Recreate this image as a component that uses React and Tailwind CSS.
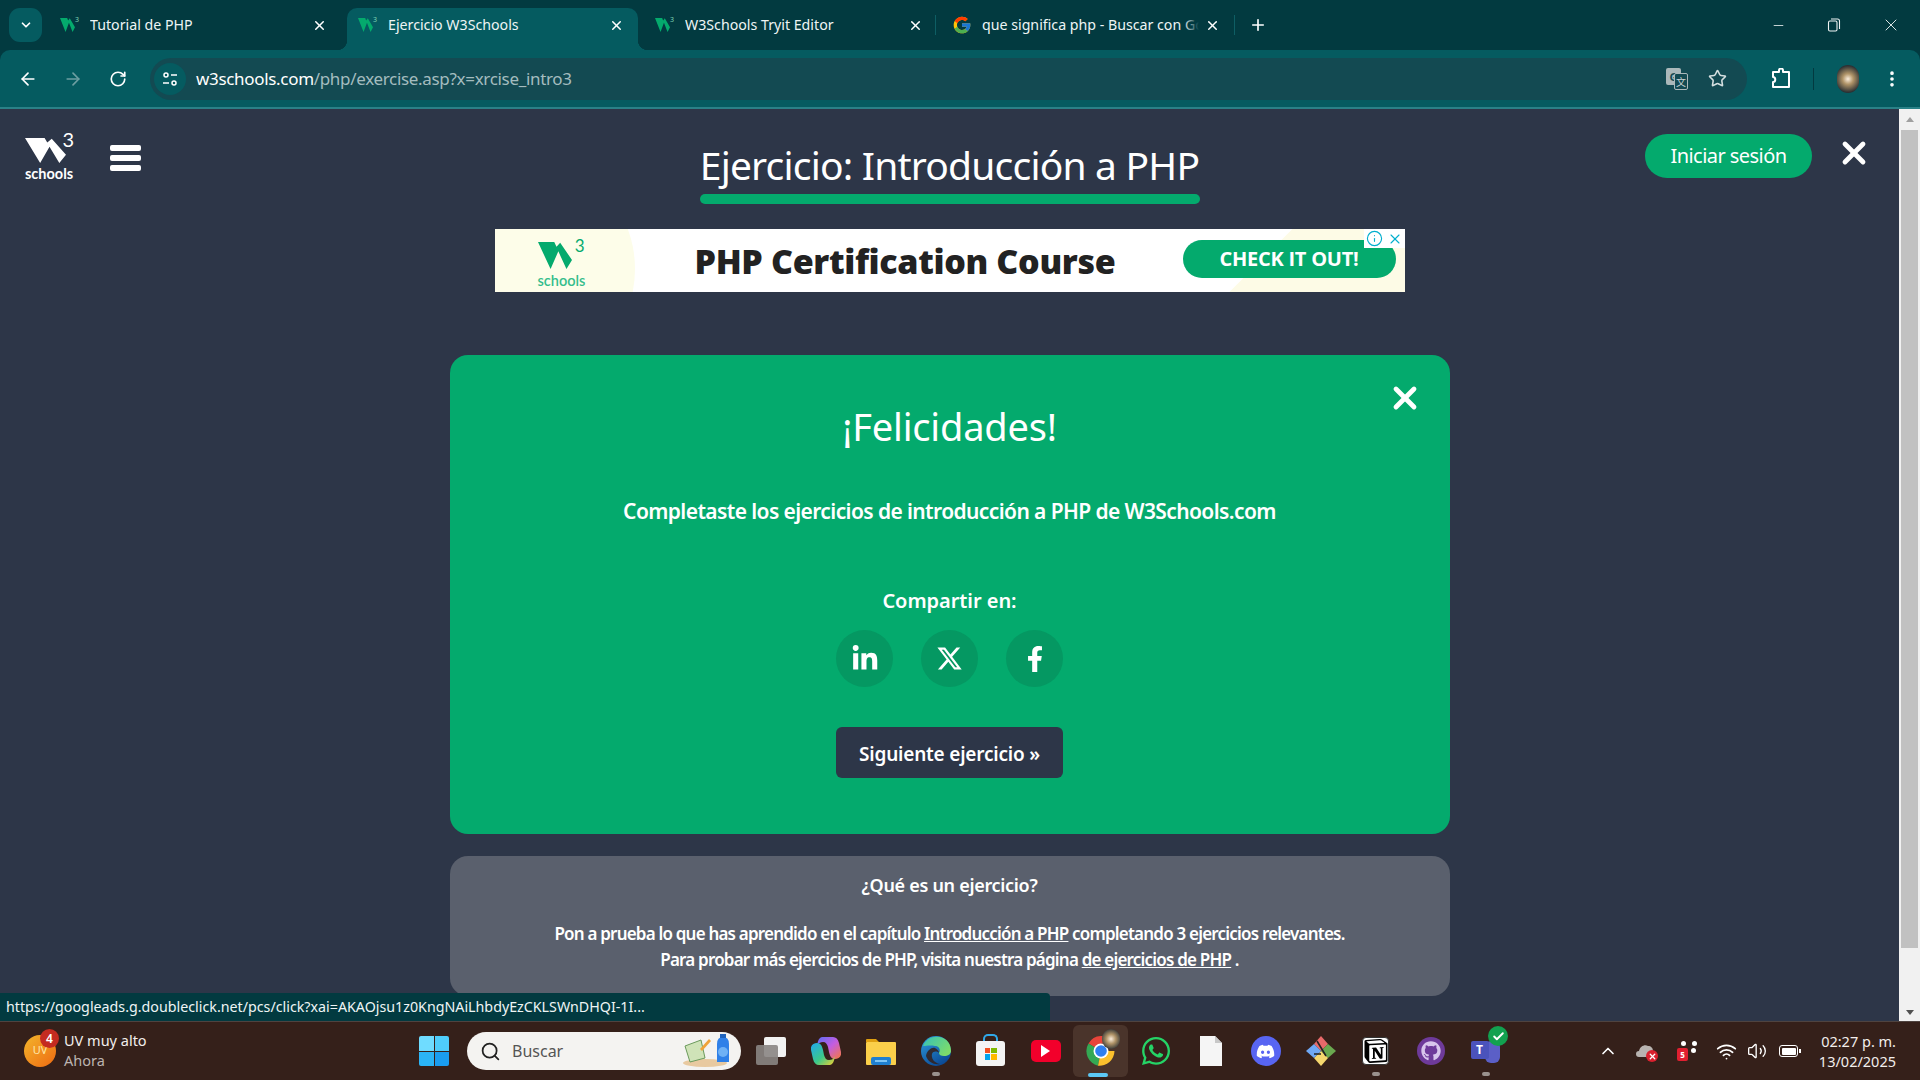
import React from "react";
import { ArrowLeft, ArrowRight, RotateCw, Star, ChevronDown, Plus, X, Minus, Search, EllipsisVertical, ChevronUp, Wifi, Volume2, Info, Check } from "lucide-react";
import { FaLinkedinIn, FaFacebookF, FaWhatsapp, FaDiscord, FaGithub } from "react-icons/fa";
import { FaXTwitter } from "react-icons/fa6";
import { FcGoogle } from "react-icons/fc";
import { SiNotion } from "react-icons/si";

const W = ({ className }) => (
  <svg viewBox="0 0 92 78" preserveAspectRatio="none" className={className} fill="currentColor">
    <path d="M0 0H44L50 14L60 2L92 52L77 78L55 27L34 78Z" />
  </svg>
);

const Favicon = () => (
  <span className="relative flex w-5 h-5 items-center shrink-0 text-[#04AA6D]">
    <W className="w-[15px] h-[14px]" />
    <span className="absolute right-[1px] top-[1px] text-[7px] leading-none text-[#7fd4b4]">3</span>
  </span>
);

const Tab = ({ title, active, icon, className }) => (
  <div className={`relative flex items-center h-[42px] rounded-t-[10px] pl-[11px] pb-[8px] ${className} ${active ? "bg-[#055b60]" : ""}`}>
    {active && <span className="absolute -left-[10px] bottom-0 w-[10px] h-[10px] bg-[radial-gradient(circle_at_0_0,transparent_10px,#055b60_10.5px)]" />}
    {active && <span className="absolute -right-[10px] bottom-0 w-[10px] h-[10px] bg-[radial-gradient(circle_at_100%_0,transparent_10px,#055b60_10.5px)]" />}
    <span className="w-5 h-5 flex items-center justify-center shrink-0">{icon || <Favicon />}</span>
    <span className="relative ml-[10px] mr-[6px] flex-1 overflow-hidden whitespace-nowrap text-[14.2px] text-[#eef5f5]">
      {title}
      <span className="absolute right-0 top-0 w-[16px] h-full bg-[linear-gradient(90deg,transparent,#023a40)]" style={{ display: active ? "none" : undefined }} />
    </span>
    <X size={15} strokeWidth={2.4} className="text-white shrink-0" />
  </div>
);

const Sep = () => <span className="w-[1px] h-[20px] bg-[#0e5e64] mb-[15px] shrink-0" />;

const TabStrip = () => (
  <div className="h-[50px] bg-[#023a40] flex items-end shrink-0">
    <div className="ml-[9px] mb-[8px] mr-[7px] w-[33px] h-[34px] rounded-[11px] bg-[#055b60] flex items-center justify-center">
      <ChevronDown size={14} strokeWidth={3} className="text-white" />
    </div>
    <Tab title="Tutorial de PHP" className="w-[298px] pr-[20px]" />
    <Tab title="Ejercicio W3Schools" active className="w-[291px] pr-[14px]" />
    <Tab title="W3Schools Tryit Editor" className="w-[291px] ml-[6px] pr-[12px]" />
    <Sep />
    <Tab title="que significa php - Buscar con Google" className="w-[293px] ml-[5px] pr-[14px]" icon={<FcGoogle size={20} />} />
    <Sep />
    <div className="ml-[13px] mb-[15px] w-[20px] h-[20px] flex items-center justify-center">
      <Plus size={18} strokeWidth={2.2} className="text-white" />
    </div>
    <div className="ml-auto flex items-center self-start text-[#eef3f3] h-[50px]">
      <div className="w-[56px] flex justify-center"><Minus size={15} strokeWidth={1.3} /></div>
      <div className="w-[56px] flex justify-center">
        <svg width="14" height="14" viewBox="0 0 14 14" fill="none" stroke="currentColor" strokeWidth="1.1"><rect x="1.5" y="3" width="8.5" height="10" rx="1.4" /><path d="M4 1h6.5A2 2 0 0 1 12.5 3v8" /></svg>
      </div>
      <div className="w-[58px] flex justify-center"><X size={20} strokeWidth={1.1} /></div>
    </div>
  </div>
);

const NavBtn = ({ children }) => <div className="w-[45px] flex justify-center shrink-0">{children}</div>;

const Toolbar = () => (
  <div className="h-[57px] bg-[#055b60] flex items-center rounded-t-[10px] shrink-0 pl-[5px]">
    <NavBtn><ArrowLeft size={20} strokeWidth={2} className="text-white" /></NavBtn>
    <NavBtn><ArrowRight size={20} strokeWidth={2} className="text-[#6d9ea1]" /></NavBtn>
    <NavBtn><RotateCw size={18} strokeWidth={2.2} className="text-white" /></NavBtn>
    <div className="ml-[10px] w-[1597px] h-[42px] rounded-full bg-[#134a52] flex items-center pl-[4px] shrink-0">
      <div className="w-[32px] h-[32px] rounded-full bg-[#055b60] flex items-center justify-center shrink-0">
        <svg width="16" height="16" viewBox="0 0 16 16" fill="none" stroke="white" strokeWidth="1.5"><circle cx="4" cy="4" r="2" /><path d="M9 4h6M1 12h6" /><circle cx="12" cy="12" r="2" /></svg>
      </div>
      <span className="ml-[10px] pt-[1px] text-[17px] text-white tracking-[-0.32px]">w3schools.com<span className="text-[#a4bcbf]">/php/exercise.asp?x=xrcise_intro3</span></span>
      <div className="ml-auto flex items-center pr-[20px] gap-[20px]">
        <div className="relative w-[22px] h-[22px]">
          <span className="absolute left-0 top-0 w-[15px] h-[17px] rounded-[2px] bg-[#aab8ba] text-[#134a52] text-[11px] font-bold leading-[17px] text-center">G</span>
          <span className="absolute right-0 bottom-0 w-[14px] h-[17px] rounded-[2px] border border-[#aab8ba] bg-[#134a52] text-[#c8d3d4] text-[10px] leading-[15px] text-center font-['Noto_Sans_CJK_SC',sans-serif]">文</span>
        </div>
        <Star size={19} strokeWidth={2} className="text-[#d5dfe0]" />
      </div>
    </div>
    <div className="ml-[16px] w-[36px] flex justify-center shrink-0">
      <svg width="20" height="22" viewBox="0 0 20 22" fill="none" stroke="white" strokeWidth="2"><path d="M8 4V2.5a2 2 0 0 1 4 0V4h6v15H2v-5c3 0 3-5 0-5V4z" strokeLinejoin="round" /></svg>
    </div>
    <span className="w-[1px] h-[22px] bg-[#023a40] ml-[14px] shrink-0" />
    <div className="ml-[23px] w-[22px] h-[28px] rounded-full shrink-0 bg-[radial-gradient(circle,#fbeedd_0%,#b09468_30%,#2c3033_75%)]" />
    <div className="ml-[21px] w-[24px] flex justify-center shrink-0"><EllipsisVertical size={20} strokeWidth={2.4} className="text-white" /></div>
  </div>
);

const Social = ({ children }) => (
  <div className="w-[57px] h-[57px] rounded-full bg-[#059862] flex items-center justify-center text-white">{children}</div>
);

const Page = () => (
  <div className="flex-1 h-full overflow-hidden flex flex-col items-center text-white font-['Noto_Sans',sans-serif]">
    <header className="relative w-full h-[120px] shrink-0">
      <div className="absolute left-[25px] top-[29px] w-[49px]">
        <W className="w-[41px] h-[25px] text-white" />
        <span className="absolute right-0 -top-[9px] text-[20px] leading-none font-['Lato',sans-serif]">3</span>
        <div className="text-[14.5px] leading-[16px] mt-[3px] font-bold font-['Lato',sans-serif]">schools</div>
      </div>
      <div className="absolute left-[110px] top-[36px] w-[31px] flex flex-col gap-[4px]">
        <span className="h-[6px] rounded-[2px] bg-white" />
        <span className="h-[6px] rounded-[2px] bg-white" />
        <span className="h-[6px] rounded-[2px] bg-white" />
      </div>
      <div className="flex flex-col items-center pt-[30px]">
        <h1 className="text-[39px] leading-[52px] tracking-[-0.8px] whitespace-nowrap w-[500px] text-center font-normal">Ejercicio: Introducción a PHP</h1>
        <span className="w-[500px] h-[10px] mt-[3px] rounded-full bg-[#04AA6D]" />
      </div>
      <div className="absolute left-[1645px] top-[25px] w-[167px] h-[44px] rounded-full bg-[#04AA6D] flex items-center justify-center text-[20px] tracking-[-0.55px]">Iniciar sesión</div>
      <X size={36} strokeWidth={3.2} className="absolute left-[1836px] top-[26px] text-white" />
    </header>

    <div className="relative w-[910px] h-[63px] bg-white shrink-0 overflow-hidden text-[#222]">
      <div className="absolute -left-[90px] -top-[75px] w-[230px] h-[230px] rounded-full bg-[#fdfde9]" />
      <div className="absolute -right-[90px] -bottom-[110px] w-[220px] h-[220px] rotate-45 bg-[#fdfbe6]" />
      <div className="absolute left-[43px] top-[13px] w-[47px] text-[#04AA6D]">
        <W className="w-[34px] h-[27px]" />
        <span className="absolute right-0 -top-[5px] text-[17px] leading-none font-['Lato',sans-serif]">3</span>
        <div className="text-[14.5px] leading-[14px] mt-[5px] font-semibold text-[#35bd8c] font-['Lato',sans-serif]">schools</div>
      </div>
      <div className="relative h-full flex items-center">
        <span className="ml-[200px] text-[34px] font-extrabold tracking-[-0.35px] whitespace-nowrap font-['Open_Sans',sans-serif] leading-none">PHP Certification Course</span>
        <span className="absolute left-[688px] top-[11px] w-[213px] h-[38px] rounded-full bg-[#04AA6D] text-white text-[20px] font-bold tracking-[-0.25px] flex items-center justify-center font-['Open_Sans',sans-serif]">CHECK IT OUT!</span>
      </div>
      <div className="absolute right-0 top-0 w-[41px] h-[19px] bg-white flex items-center justify-between text-[#00aecd] px-[2px]">
        <Info size={17} strokeWidth={1.6} />
        <X size={16} strokeWidth={1.6} />
      </div>
    </div>

    <section className="relative w-[1000px] h-[479px] mt-[63px] shrink-0 rounded-[18px] bg-[#04AA6D] flex flex-col items-center">
      <X size={36} strokeWidth={3.2} className="absolute left-[937px] top-[25px] text-white" />
      <h2 className="text-[38px] leading-[52px] mt-[45px] font-normal tracking-[-0.2px]">¡Felicidades!</h2>
      <p className="text-[21px] leading-[30px] font-semibold mt-[44px] tracking-[-0.6px]">Completaste los ejercicios de introducción a PHP de W3Schools.com</p>
      <p className="text-[20px] leading-[28px] font-semibold mt-[61px] tracking-[-0.05px]">Compartir en:</p>
      <div className="flex gap-[28px] mt-[15px]">
        <Social><FaLinkedinIn size={28} /></Social>
        <Social><FaXTwitter size={27} /></Social>
        <Social><FaFacebookF size={26} /></Social>
      </div>
      <div className="mt-[40px] w-[227px] h-[51px] pt-[3px] rounded-[6px] bg-[#2d3648] flex items-center justify-center text-[19px] font-semibold tracking-[-0.2px]">Siguiente ejercicio »</div>
    </section>

    <section className="w-[1000px] h-[140px] mt-[22px] shrink-0 rounded-[18px] bg-[#5a606d] flex flex-col items-center">
      <h3 className="text-[18px] leading-[26px] font-semibold mt-[16px] tracking-[-0.3px]">¿Qué es un ejercicio?</h3>
      <p className="text-[17px] leading-[26px] font-semibold mt-[23px] text-center tracking-[-0.8px]">
        Pon a prueba lo que has aprendido en el capítulo <u>Introducción a PHP</u> completando 3 ejercicios relevantes.<br />
        Para probar más ejercicios de PHP, visita nuestra página <u>de ejercicios de PHP</u> .
      </p>
    </section>
  </div>
);

const TaskIcon = ({ children, active, dot }) => (
  <div className={`relative w-[55px] h-[52px] flex items-center justify-center rounded-[6px] ${active ? "bg-[#4a342b]" : ""}`}>
    {children}
    {dot && <span className="absolute bottom-[1px] left-[24px] w-[8px] h-[4px] rounded-full bg-[#9a918d]" />}
    {active && <span className="absolute bottom-[0px] left-[15px] w-[20px] h-[4px] rounded-full bg-[#5cc8f5]" />}
  </div>
);

const Taskbar = () => (
  <div className="h-[59px] bg-[#35201a] border-t border-[#4f4340] shrink-0 flex items-center relative text-white font-['Noto_Sans',sans-serif]">
    <div className="relative ml-[24px] w-[32px] h-[32px] rounded-full bg-[linear-gradient(135deg,#f3b52b,#ee6a12)] mt-[-1px] flex items-center justify-center text-[11px] text-[#ffe7a8]">
      UV
      <span className="absolute -right-[3px] -top-[6px] w-[19px] h-[19px] rounded-full bg-[#c42b20] text-white text-[12px] leading-[19px] text-center font-semibold">4</span>
    </div>
    <div className="ml-[8px] text-[14.5px] leading-[20px] w-[100px] -mt-[2px]">
      <div className="text-[#f2eeec]">UV muy alto</div>
      <div className="text-[#bcb4b0]">Ahora</div>
    </div>
    <div className="ml-[255px] w-[30px] h-[30px] grid grid-cols-2 gap-[1px]">
      <span className="rounded-tl-[2px] bg-[#6fdcff]" /><span className="rounded-tr-[2px] bg-[#4fcdfb]" />
      <span className="rounded-bl-[2px] bg-[#2bb4f6]" /><span className="rounded-br-[2px] bg-[#1a9df0]" />
    </div>
    <div className="ml-[18px] w-[274px] h-[38px] rounded-full bg-[#f4f3f1] flex items-center pl-[13px] text-[#555] relative overflow-hidden">
      <Search size={21} strokeWidth={2} className="text-[#222]" />
      <span className="ml-[11px] text-[16px] text-[#555]">Buscar</span>
      <div className="absolute right-[6px] bottom-[2px] flex items-end">
        <svg width="54" height="34" viewBox="0 0 54 34">
          <ellipse cx="24" cy="29" rx="22" ry="4" fill="#e8c9a0" />
          <path d="M4 12L20 6L24 24L9 28Z" fill="#cfe3b8" stroke="#6b9a5c" />
          <path d="M19 15L28 5L30 7L21 17Z" fill="#f0a33a" />
          <path d="M36 10Q36 3 42 3Q48 3 48 10V28H36Z" fill="#2f80e8" />
          <rect x="39" y="0" width="6" height="4" fill="#1f63bd" />
          <circle cx="42" cy="18" r="5" fill="#6fb1f5" />
        </svg>
      </div>
    </div>
    <div className="ml-[2px] flex items-center">
      <TaskIcon>
        <div className="relative w-[30px] h-[28px]">
          <span className="absolute right-0 top-0 w-[22px] h-[20px] rounded-[2px] bg-[#f2f2f2]" />
          <span className="absolute left-0 bottom-0 w-[22px] h-[20px] rounded-[2px] bg-[#8a8583]/90" />
        </div>
      </TaskIcon>
      <TaskIcon>
        <svg width="30" height="30" viewBox="0 0 30 30">
          <defs>
            <linearGradient id="cp1" x1="0" y1="0" x2="1" y2="1"><stop offset="0" stopColor="#20a8f0" /><stop offset="0.55" stopColor="#3cc98a" /><stop offset="1" stopColor="#f7d02e" /></linearGradient>
            <linearGradient id="cp2" x1="0" y1="0" x2="1" y2="1"><stop offset="0" stopColor="#5a6cf5" /><stop offset="0.5" stopColor="#c45de0" /><stop offset="1" stopColor="#f5783c" /></linearGradient>
          </defs>
          <path d="M11 1h11c3 0 5 2 6 6l2 9c1 5-3 7-6 7-4 0-5-3-6-7l-1-5c-1-3-2-5-5-5-5 0-6 4-6 4s1-9 5-9z" fill="url(#cp2)" />
          <path d="M19 29H8c-3 0-5-2-6-6l-2-9c-1-5 3-7 6-7 4 0 5 3 6 7l1 5c1 3 2 5 5 5 5 0 6-4 6-4s-1 9-5 9z" fill="url(#cp1)" />
        </svg>
      </TaskIcon>
      <TaskIcon>
        <svg width="30" height="30" viewBox="0 0 30 30">
          <path d="M0 4a1 1 0 0 1 1-1h9l3 3h-13z" fill="#e0a010" />
          <rect x="0" y="6" width="30" height="23" rx="1" fill="#fbcf4a" />
          <rect x="5" y="21" width="20" height="8" rx="2" fill="#1f7fd0" />
          <rect x="9" y="24" width="12" height="2" fill="#7cc4f5" />
        </svg>
      </TaskIcon>
      <TaskIcon dot>
        <svg width="30" height="30" viewBox="0 0 30 30">
          <defs>
            <linearGradient id="ed" x1="0" y1="0" x2="0.6" y2="1"><stop offset="0" stopColor="#2f9ee0" /><stop offset="1" stopColor="#0b4a96" /></linearGradient>
            <linearGradient id="ed2" x1="0" y1="0" x2="1" y2="0.6"><stop offset="0" stopColor="#35c1b8" /><stop offset="1" stopColor="#7ddc6a" /></linearGradient>
          </defs>
          <circle cx="15" cy="15" r="15" fill="url(#ed)" />
          <path d="M2 10C5 2 14-1 22 2c5 2 8 7 8 13 0 3-3 5-7 5-3 0-5-1-5-3 2-3 0-7-4-7-5-1-9 0-12 0z" fill="url(#ed2)" />
          <path d="M18 17c-2-2-6-2-7 1-1 4 2 9 8 10-6 1-12-2-14-8 1-6 6-9 9-8 2 1 4 3 4 5z" fill="#35201a" opacity="0.85" />
        </svg>
      </TaskIcon>
      <TaskIcon>
        <div className="relative w-[29px] h-[32px] mt-[-2px]">
          <span className="absolute left-[7px] top-0 w-[15px] h-[9px] rounded-t-[5px] border-2 border-b-0 border-[#30a8e8]" />
          <div className="absolute bottom-0 w-[29px] h-[25px] rounded-[3px] bg-[#f4f4f4] flex items-center justify-center">
            <div className="grid grid-cols-2 gap-[1px] w-[12px] h-[12px]">
              <span className="bg-[#f25022]" /><span className="bg-[#7fba00]" /><span className="bg-[#00a4ef]" /><span className="bg-[#ffb900]" />
            </div>
          </div>
        </div>
      </TaskIcon>
      <TaskIcon>
        <div className="w-[30px] h-[22px] rounded-[5px] bg-[#f2002b] flex items-center justify-center">
          <span className="w-0 h-0 border-y-[6px] border-y-transparent border-l-[9px] border-l-white" />
        </div>
      </TaskIcon>
      <TaskIcon active>
        <svg width="30" height="30" viewBox="0 0 30 30">
          <path d="M15 15L2.5 7.5A15 15 0 0 1 28.5 7.5H15z" fill="#e8443a" />
          <path d="M15 15L2.5 7.5A15 15 0 0 0 12 29.7z" fill="#34a853" />
          <path d="M15 15H28.5A15 15 0 0 1 12 29.7z" fill="#fbc02d" />
          <circle cx="15" cy="15" r="7.5" fill="white" />
          <circle cx="15" cy="15" r="5.8" fill="#2f7ff0" />
        </svg>
        <span className="absolute left-[29px] top-[4px] w-[18px] h-[20px] rounded-full bg-[radial-gradient(circle,#fbeedd_0%,#b09468_35%,#2c3033_80%)]" />
      </TaskIcon>
      <TaskIcon><FaWhatsapp size={32} className="text-[#25d366]" /></TaskIcon>
      <TaskIcon>
        <svg width="22" height="30" viewBox="0 0 22 30"><path d="M0 0H15L22 7V30H0z" fill="#f5f5f5" /><path d="M15 0L22 7H15z" fill="#c8c8c8" /></svg>
      </TaskIcon>
      <TaskIcon>
        <div className="w-[30px] h-[30px] rounded-full bg-[#5865f2] flex items-center justify-center"><FaDiscord size={19} className="text-white" /></div>
      </TaskIcon>
      <TaskIcon>
        <svg width="30" height="30" viewBox="0 0 30 30">
          <path d="M15 15L8 8L15 0L22 8z" fill="#e86a6a" />
          <path d="M15 15L22 8L30 15L22 22z" fill="#6aa84f" />
          <path d="M15 15L22 22L15 30L8 22z" fill="#f5d76e" />
          <path d="M15 15L8 22L0 15L8 8z" fill="#6fa8f5" />
          <path d="M11 5L20 20M8 18h7" stroke="#222" strokeWidth="1.6" fill="none" />
        </svg>
      </TaskIcon>
      <TaskIcon dot>
        <div className="w-[27px] h-[28px] rounded-[4px] bg-white flex items-center justify-center border border-[#333]"><SiNotion size={24} className="text-black" /></div>
      </TaskIcon>
      <TaskIcon>
        <div className="w-[28px] h-[28px] rounded-full bg-[#6e3a9a] flex items-center justify-center"><FaGithub size={20} className="text-[#d8c5ec]" /></div>
      </TaskIcon>
      <TaskIcon dot>
        <div className="relative w-[30px] h-[26px]">
          <span className="absolute right-[1px] top-[3px] w-[15px] h-[22px] rounded-[6px] bg-[#5b5fc7]" />
          <span className="absolute left-0 top-[3px] w-[18px] h-[18px] rounded-[2px] bg-[#4b53bc] text-white text-[12px] leading-[18px] text-center font-bold">T</span>
        </div>
        <span className="absolute right-[5px] top-[1px] w-[20px] h-[20px] rounded-full bg-[#12a150] flex items-center justify-center"><Check size={13} strokeWidth={3.5} className="text-white" /></span>
      </TaskIcon>
    </div>
    <div className="absolute left-[1598px] top-0 h-full flex items-center">
      <ChevronUp size={20} strokeWidth={2} className="text-white" />
      <div className="relative ml-[18px] w-[22px] h-[16px]">
        <svg width="20" height="14" viewBox="0 0 20 14"><path d="M3 14a3 3 0 0 1 0-6C4 3 9 1 12 3c3 0 5 2 5 5s-1 6-4 6z" fill="#b8b3b0" /></svg>
        <span className="absolute right-0 bottom-[-3px] w-[12px] h-[12px] rounded-full bg-[#d9202e] flex items-center justify-center"><X size={9} strokeWidth={3.5} className="text-white" /></span>
      </div>
      <div className="relative ml-[19px] w-[20px] h-[20px]">
        <span className="absolute left-0 bottom-0 w-[11px] h-[13px] rounded-[2px] bg-[#e01f30] text-white text-[8px] leading-[13px] text-center font-bold">5</span>
        <span className="absolute left-[4px] top-0 w-[5px] h-[5px] rounded-full bg-white" />
        <span className="absolute right-0 top-0 w-[5px] h-[5px] rounded-full bg-white" />
        <span className="absolute right-[1px] top-[7px] w-[5px] h-[5px] rounded-full bg-white" />
      </div>
      <Wifi size={21} strokeWidth={2} className="ml-[19px] text-white" />
      <Volume2 size={20} strokeWidth={1.6} className="ml-[10px] text-white" />
      <div className="ml-[12px] w-[19px] h-[12px] rounded-[3px] border-[1.5px] border-white flex items-center p-[1.5px] relative">
        <span className="w-full h-full bg-white rounded-[1px]" />
        <span className="absolute -right-[3.5px] top-[2.5px] w-[2px] h-[4px] bg-white" />
      </div>
    </div>
    <div className="absolute right-[24px] top-[9px] text-right text-[14.5px] leading-[20px] text-[#f2eeec]">
      <div>02:27 p. m.</div>
      <div>13/02/2025</div>
    </div>
  </div>
);

export default function App() {
  return (
    <div className="w-[1920px] h-[1080px] overflow-hidden flex flex-col bg-[#023a40] font-['Noto_Sans',sans-serif]">
      <TabStrip />
      <Toolbar />
      <div className="h-[2px] bg-[#2a8187] shrink-0" />
      <div className="relative flex-1 min-h-0 flex bg-[#2d3648]">
        <Page />
        <div className="w-[21px] h-full bg-[#f1f1f1] shrink-0 flex flex-col">
          <div className="h-[21px] flex items-center justify-center"><span className="w-0 h-0 border-x-[4px] border-x-transparent border-b-[5px] border-b-[#a0a0a0]" /></div>
          <div className="mx-[2px] h-[818px] bg-[#c1c1c1]" />
          <div className="mt-auto h-[17px] flex items-center justify-center"><span className="w-0 h-0 border-x-[4px] border-x-transparent border-t-[5px] border-t-[#505050]" /></div>
        </div>
        <div className="absolute left-0 bottom-0 w-[1050px] h-[28px] bg-[#023a40] rounded-tr-[4px] flex items-center pl-[6px] pb-[1px] text-[14.25px] text-[#eef5f5] whitespace-nowrap">
          https://googleads.g.doubleclick.net/pcs/click?xai=AKAOjsu1z0KngNAiLhbdyEzCKLSWnDHQI-1I...
        </div>
      </div>
      <Taskbar />
    </div>
  );
}
